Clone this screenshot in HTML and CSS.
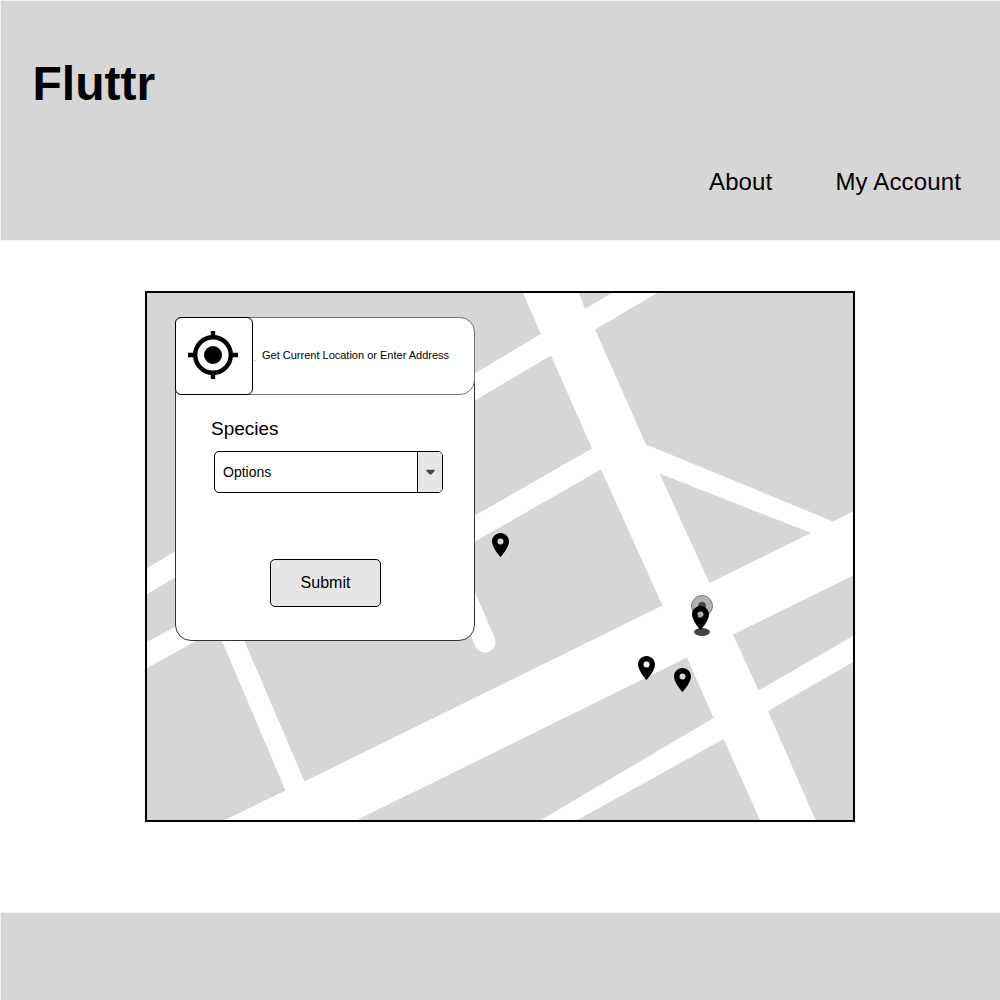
FILE: index.html
```html
<!DOCTYPE html>
<html lang="en">
<head>
<meta charset="utf-8">
<title>Fluttr</title>
<link rel="stylesheet" href="styles.css">
</head>
<body>
<header class="header">
  <h1 class="brand">Fluttr</h1>
  <nav class="nav">
    <a class="nav-link">About</a>
    <a class="nav-link">My Account</a>
  </nav>
</header>
<main class="main">
  <section class="map">
    <svg class="streets" viewBox="147 293 706 527" aria-hidden="true">
      <defs>
        <path id="pin" d="M0-12C-4.7-12-8.5-8.2-8.5-3.6C-8.5 2.7 0 12 0 12S8.5 2.7 8.5-3.6C8.5-8.2 4.7-12 0-12ZM0-.6A3 3 0 1 1 0-6.6A3 3 0 0 1 0-.6Z"/>
      </defs>
      <g class="blocks">
        <path d="M147 293H523L541 334L147 568Z"/>
        <path d="M551 355.5L592 448.5L475 515.5L175 627L147 642V594Z"/>
        <path d="M601 469.5L475 541.5L244.500 641L304.500 781.500L662.500 605.500Z"/>
        <path d="M147 668L196 641H222L285.500 790.500L225 820H147Z"/>
        <path d="M357 820L687 657.500L713.500 718L541 820Z"/>
        <path d="M577.500 820L723.500 739L760 820Z"/>
        <path d="M815.500 820L768 711L853 662V820Z"/>
        <path d="M853 575.500L733 634.500L758.500 690.500L853 636Z"/>
        <path d="M659.500 473.500L811 533L709.500 583Z"/>
        <path d="M853 511.500L833 521.500L646 444.500L595 329.500L657 293H853Z"/>
        <path d="M579 293L585 309L612 293Z"/>
      </g>
      <path class="lane" d="M460 584L485 642"/>
      <circle class="marker-ring" cx="702" cy="606" r="10.500"/>
      <circle class="marker-dark" cx="702" cy="606" r="4"/>
      <ellipse class="marker-dark" cx="702" cy="632" rx="8" ry="4"/>
      <use href="#pin" x="500.500" y="545"/>
      <use href="#pin" x="700.500" y="618"/>
      <use href="#pin" x="646.500" y="668"/>
      <use href="#pin" x="682.500" y="680"/>
    </svg>
    <form class="panel">
      <div class="address">
        <button class="locate" type="button" aria-label="Get current location">
          <svg class="locate-icon" viewBox="-25 -25 50 50">
            <circle r="17.800" fill="none" stroke="#000" stroke-width="4.400"/>
            <circle r="9"/>
            <path d="M-25-2.200h7v4.400h-7zM18-2.200h7v4.400h-7zM-2.200-24h4.400v6h-4.400zM-2.200 18h4.400v6h-4.400z"/>
          </svg>
        </button>
        <span class="speck"></span>
        <span class="address-text">Get Current Location or Enter Address</span>
      </div>
      <div class="fields">
        <div class="label">Species</div>
        <div class="select">
          <span class="select-value">Options</span>
          <span class="select-arrow"><svg width="9" height="6" viewBox="0 0 9 6"><path d="M.3.800H8.700V2L5.200 5.500H3.800L.3 2Z" fill="#444"/></svg></span>
        </div>
        <button class="submit" type="button">Submit</button>
      </div>
    </form>
  </section>
</main>
<footer class="footer"></footer>
</body>
</html>
```

FILE: styles.css
```css
* { box-sizing: border-box; }

body {
  margin: 0;
  height: 1000px;
  overflow: hidden;
  display: flex;
  flex-direction: column;
  background: #fff;
  color: #000;
  font-family: "Liberation Sans", Arial, sans-serif;
}

.header {
  height: 241px;
  padding: 55px 39px 0 31.500px;
  background: #d6d6d6;
  border: solid #f2f2f2;
  border-width: 1px 0 1px 1px;
}

.brand {
  margin: 0;
  font-size: 48px;
  line-height: 56px;
}

.nav {
  display: flex;
  justify-content: flex-end;
  gap: 63px;
  margin-top: 56px;
}

.nav-link {
  font-size: 24px;
  line-height: 28px;
  letter-spacing: 0.15px;
}

.main {
  height: 671px;
  padding-top: 50px;
  display: flex;
  justify-content: center;
  align-items: flex-start;
}

.map {
  width: 710px;
  height: 531px;
  border: 2px solid #000;
  display: grid;
}

.streets,
.panel { grid-area: 1 / 1; }

.streets {
  width: 706px;
  height: 527px;
}

.blocks { fill: #d6d6d6; }

.lane {
  stroke: #fff;
  stroke-width: 21px;
  stroke-linecap: round;
}

.marker-ring {
  fill: #b3b3b3;
  stroke: #777;
}

.marker-dark { fill: #444; }

.panel {
  z-index: 1;
  width: 300px;
  height: 324px;
  margin: 24px 0 0 28px;
  background: #fff;
  border: 1px solid #333;
  border-radius: 16px;
}

.address {
  display: flex;
  align-items: center;
  width: 300px;
  height: 78px;
  margin: -1px;
  border: 1px solid #777;
  border-radius: 6px 15px 15px 6px;
  background: #fff;
}

.locate {
  flex: none;
  display: flex;
  align-items: center;
  justify-content: center;
  width: 78px;
  height: 78px;
  margin: -1px 0 -1px -1px;
  padding: 0 2px 2px 0;
  background: #fff;
  border: 1px solid #000;
  border-radius: 6px;
}

.locate-icon {
  width: 50px;
  height: 50px;
}

.speck {
  width: 2px;
  height: 1px;
  margin: 9px 6px 0 1px;
  background: #ccc;
}

.address-text {
  margin-bottom: 2px;
  font-size: 11px;
  white-space: nowrap;
}

.fields {
  display: flex;
  flex-direction: column;
  padding: 23px 31px 0 35px;
}

.label {
  font-size: 19px;
  line-height: 24px;
}

.select {
  display: flex;
  width: 229px;
  height: 42px;
  margin: 10px 0 0 3px;
  border: 1px solid #000;
  border-radius: 5px;
  overflow: hidden;
}

.select-value {
  flex: 1;
  padding-left: 8px;
  font-size: 14px;
  line-height: 40px;
}

.select-arrow {
  display: flex;
  align-items: center;
  justify-content: center;
  width: 25px;
  background: #e6e6e6;
  border-left: 1px solid #000;
}

.submit {
  width: 111px;
  height: 48px;
  margin: 66px 0 0 59px;
  padding: 0;
  border: 1px solid #000;
  border-radius: 5px;
  background: #e6e6e6;
  color: #000;
  font: 16px "Liberation Sans", Arial, sans-serif;
}

.footer {
  flex: 1;
  background: #d6d6d6;
  border: solid #f2f2f2;
  border-width: 1px 0 0 1px;
}
```
